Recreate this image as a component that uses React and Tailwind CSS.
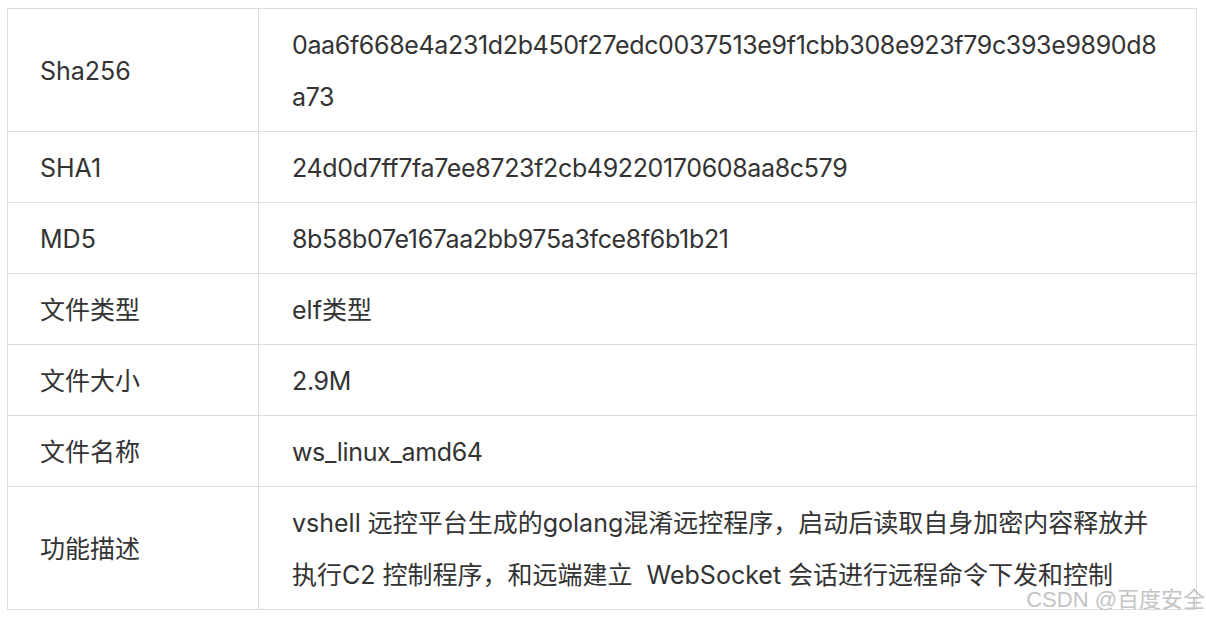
const rows = [
  { label: 'Sha256', latin: true, value: ['0aa6f668e4a231d2b450f27edc0037513e9f1cbb308e923f79c393e9890d8', 'a73'] },
  { label: 'SHA1', latin: true, value: ['24d0d7ff7fa7ee8723f2cb49220170608aa8c579'] },
  { label: 'MD5', latin: true, value: ['8b58b07e167aa2bb975a3fce8f6b1b21'] },
  { label: '文件类型', value: ['elf类型'] },
  { label: '文件大小', latin: true, value: ['2.9M'] },
  { label: '文件名称', latin: true, value: ['ws_linux_amd64'] },
  {
    label: '功能描述',
    value: [
      'vshell 远控平台生成的golang混淆远控程序，启动后读取自身加密内容释放并',
      '执行C2 控制程序，和远端建立\u00a0 WebSocket 会话进行远程命令下发和控制',
    ],
  },
];

export default function App() {
  return (
    <div className="relative w-[1206px] h-[618px] bg-white pt-[8px] pl-[7px] overflow-hidden font-['Inter','Noto_Sans_CJK_SC',sans-serif]">
      <table className="border-collapse table-fixed w-[1190px] text-[25px] text-[#333333]">
        <colgroup>
          <col className="w-[251px]" />
          <col />
        </colgroup>
        <tbody>
          {rows.map((row) => (
            <tr key={row.label}>
              <td className="border border-[#dddddd] px-[32px] pt-[10px] pb-[8px] leading-[52px] align-middle whitespace-nowrap">
                {row.label}
              </td>
              <td
                className={`border border-[#dddddd] px-[33px] pt-[10px] pb-[8px] leading-[52px] align-middle ${
                  row.latin ? 'tracking-[-0.35px]' : ''
                }`}
              >
                {row.value.map((line, i) => (
                  <div key={i} className="whitespace-nowrap">{line}</div>
                ))}
              </td>
            </tr>
          ))}
        </tbody>
      </table>
      <div className="absolute right-[1px] bottom-[7px] text-[22px] leading-none text-[#c4c4c4] font-['Liberation_Sans','Noto_Sans_CJK_SC',sans-serif]">
        CSDN @百度安全
      </div>
    </div>
  );
}
